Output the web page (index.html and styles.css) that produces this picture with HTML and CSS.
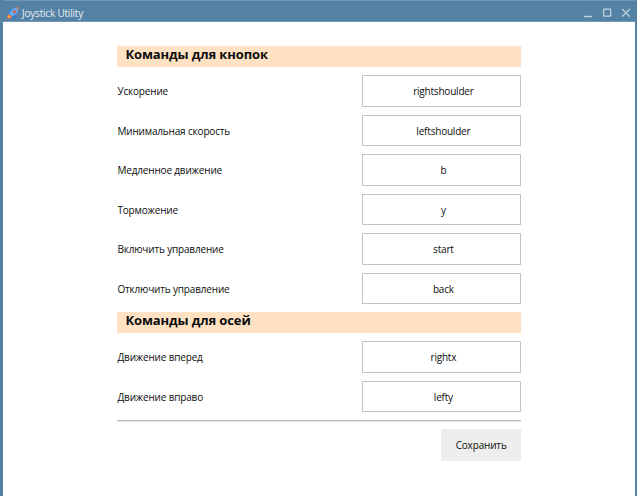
FILE: index.html
```
<!DOCTYPE html>
<html lang="ru">
<head>
<meta charset="utf-8">
<title>Joystick Utility</title>
<link rel="stylesheet" href="styles.css">
</head>
<body>
<div class="window">
  <header class="titlebar">
    <svg class="logo" viewBox="0 0 14 14" width="14" height="14">
      <path d="M3 8 1.5 9.2 1 12.8 4.8 12.2 6.5 10.5Z" fill="#f0683a"/>
      <path d="M2.8 9.2 2 12 4.8 11Z" fill="#ffc34a"/>
      <path d="M6.5 3.4 2.6 4.6 .8 7.8 4 8Z" fill="#3c84d8"/>
      <path d="M10.4 7.6 9.6 11.2 6.5 13.2 6 10Z" fill="#3474cb"/>
      <path d="M3.5 8.2C4.6 4.3 7.6 1.3 12.8 1 12.6 6.2 9.7 9.4 5.8 10.5Z" fill="#63aaf4"/>
      <path d="M9.8 1.5 12.9 1 12.4 4.1Z" fill="#f2643d"/>
      <circle cx="8.4" cy="5.7" r="1.5" fill="#e8543c"/>
    </svg>
    <h1 class="title">Joystick Utility</h1>
    <svg class="controls" viewBox="0 0 48 10" width="48" height="10" fill="none" stroke="#c3d3e0">
      <path d="M0 8.5H8" stroke-width="1.4"/>
      <rect x="19.7" y="1.2" width="7" height="7" rx=".5" stroke-width="1.3"/>
      <path d="M38.2 1 45.8 8.6M45.8 1 38.2 8.6" stroke-width="1.2"/>
    </svg>
  </header>
  <main class="form">
    <h2 class="section">Команды для кнопок</h2>
    <div class="row"><span>Ускорение</span><button class="field">rightshoulder</button></div>
    <div class="row"><span>Минимальная скорость</span><button class="field">leftshoulder</button></div>
    <div class="row"><span>Медленное движение</span><button class="field">b</button></div>
    <div class="row"><span>Торможение</span><button class="field">y</button></div>
    <div class="row"><span>Включить управление</span><button class="field">start</button></div>
    <div class="row"><span>Отключить управление</span><button class="field">back</button></div>
    <h2 class="section">Команды для осей</h2>
    <div class="row"><span>Движение вперед</span><button class="field">rightx</button></div>
    <div class="row"><span>Движение вправо</span><button class="field">lefty</button></div>
    <footer class="footer"><button class="save">Сохранить</button></footer>
  </main>
</div>
</body>
</html>
```
FILE: styles.css
```
* {
  box-sizing: border-box;
}

body {
  margin: 0;
  font: 10px/14px "Open Sans", sans-serif;
  letter-spacing: -0.17px;
  color: #0c0c0c;
}

.window {
  height: 496px;
  border: solid #5482a5;
  border-width: 0 2px 0 3px;
  background: #fff;
  overflow: hidden;
}

.titlebar {
  display: flex;
  align-items: center;
  height: 22px;
  margin: 0 -2px 0 -3px;
  padding: 3px 5px 0 6px;
  border-top: 1px solid #7297b3;
  border-bottom: 1px solid #7198b5;
  background: #5482a5;
}

.title {
  margin: 0 auto 0 2px;
  font-size: 10px;
  letter-spacing: -0.2px;
  font-weight: 400;
  color: #e6edf2;
}

.form {
  display: flex;
  flex-direction: column;
  gap: 8px;
  width: 403.5px;
  margin: 24px 0 0 114.4px;
}

.section {
  height: 21.2px;
  margin: 0;
  padding: 0 8px;
  background: #ffe2c3;
  font-size: 13px;
  letter-spacing: -0.12px;
  line-height: 17px;
  font-weight: 700;
  color: #0c0c0c;
}

.row {
  display: flex;
  align-items: center;
  justify-content: space-between;
  height: 31.5px;
}

.row span {
  padding-top: 0.5px;
}

.field,
.save {
  height: 31.5px;
  padding: 0;
  border: 0;
  font: inherit;
  letter-spacing: inherit;
  color: inherit;
}

.field {
  width: 159px;
  padding: 0.5px 0 0 4px;
  border: 1px solid #c4c4c4;
  background: #fff;
  letter-spacing: -0.2px;
}

.footer {
  display: flex;
  justify-content: flex-end;
  padding-top: 8px;
  border-top: 1px solid #b5b5b5;
  box-shadow: inset 0 1px #e8e8e8;
}

.save {
  width: 79.5px;
  background: #eee;
}
```
